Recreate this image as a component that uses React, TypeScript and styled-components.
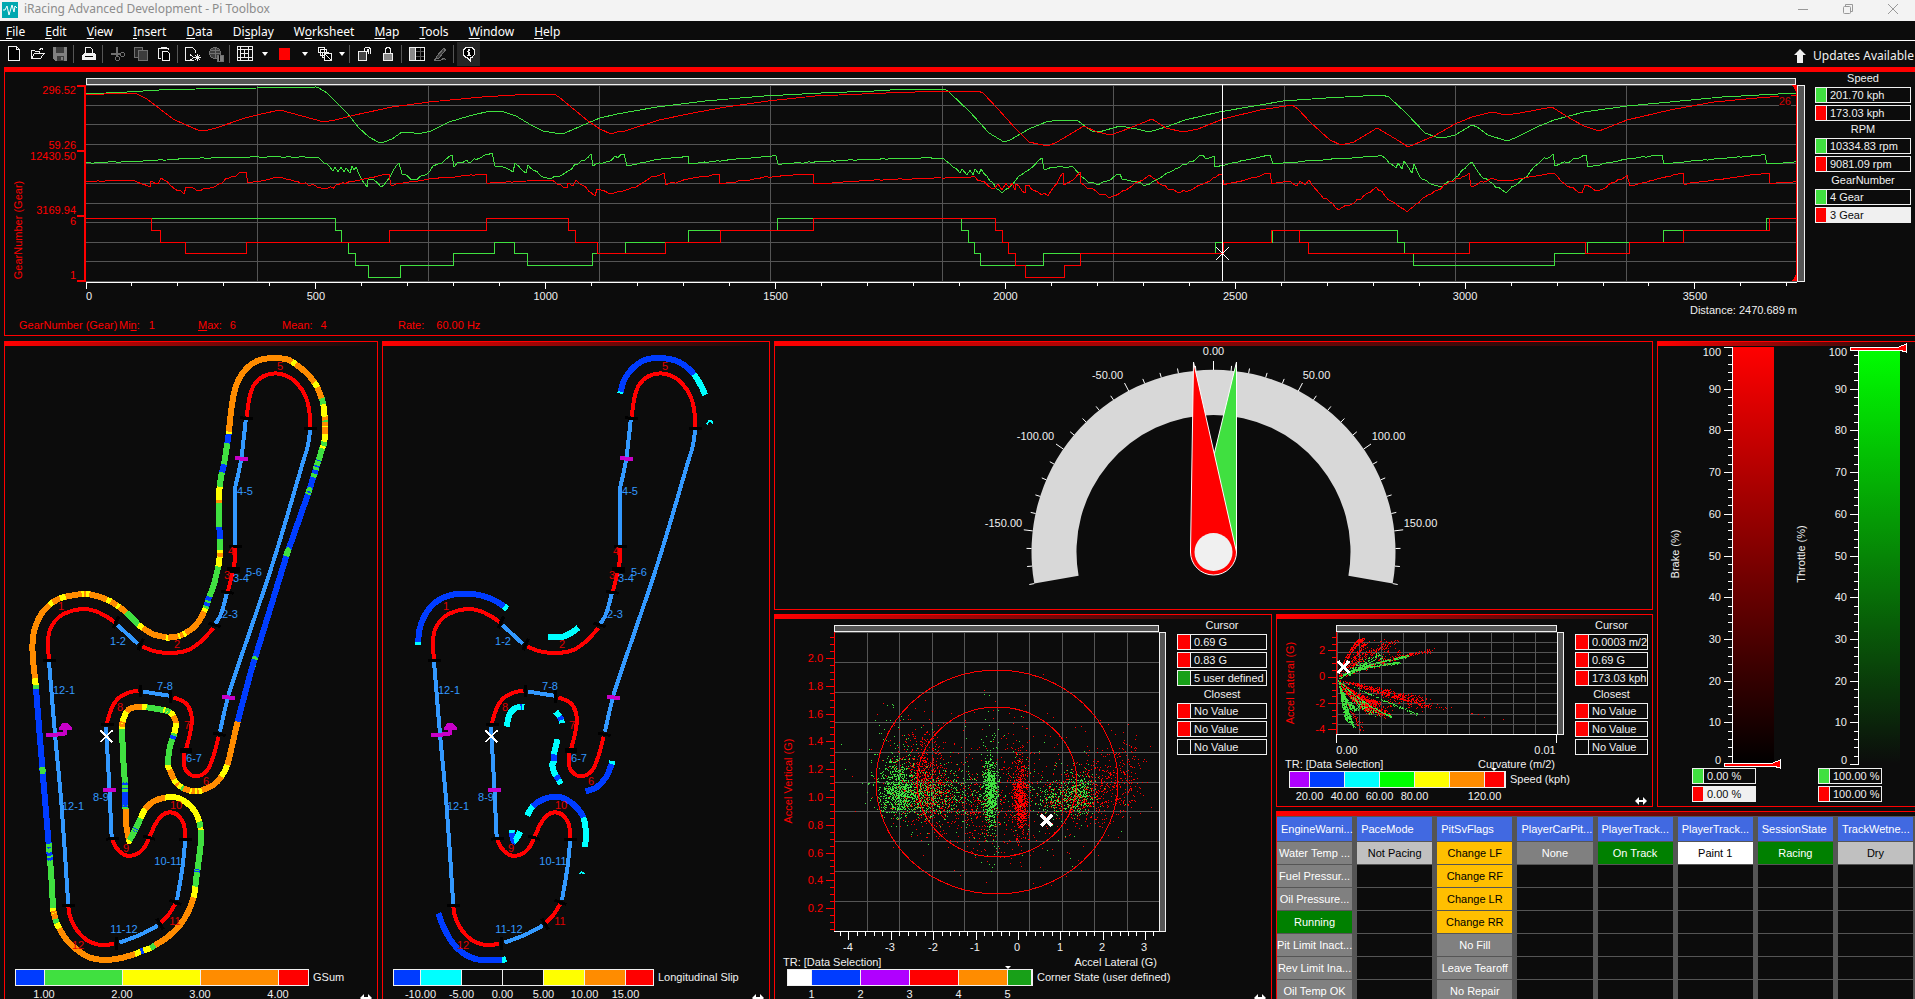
import React from 'react';
import styled, { createGlobalStyle } from 'styled-components';

const GREEN = '#40e040';
const RED = '#ff0000';
const BLUE = '#003cff';
const SKY = '#3399ff';
const CYAN = '#00ffff';
const YELLOW = '#ffff00';
const ORANGE = '#ff8c00';
const PURPLE = '#b000ff';
const MAGENTA = '#c800c8';
const BG = '#0c0c0c';
const GRID = '#555555';
const LIGHT = '#f0f0f0';

const GlobalStyle = createGlobalStyle`
  * { box-sizing: border-box; }
  html, body { margin: 0; padding: 0; background: ${BG}; overflow: hidden; }
  body { font: 11px/16px "Liberation Sans", Arial, sans-serif; color: ${LIGHT}; }
  svg { display: block; }
  svg text { font: 11px "Liberation Sans", Arial, sans-serif; }
  button { font: inherit; color: inherit; background: none; border: 0; padding: 0; margin: 0; }
`;

const Shell = styled.div`
  display: flex;
  flex-direction: column;
  height: 100vh;
  overflow: hidden;
`;

/* ---------- window chrome ---------- */

const TitleBar = styled.header`
  display: flex;
  align-items: center;
  height: 21px;
  padding-left: 2px;
  background: #f3f3f3;
  color: #8c8c8c;
  flex: none;
`;
const TitleText = styled.h1`
  flex: 1;
  margin: 0;
  padding: 0 0 3px 6px;
  font: 12px/18px "Noto Sans", "Open Sans", sans-serif;
`;
const WindowButton = styled.button`
  width: 45px;
  height: 20px;
  display: grid;
  place-items: center;
  padding-bottom: 4px;
`;

const MenuBar = styled.nav`
  display: flex;
  align-items: center;
  gap: 20px;
  height: 20px;
  padding: 2px 0 0 6px;
  border-bottom: 1px solid #ffffff;
  font: 12px/18px "Noto Sans", "Open Sans", sans-serif;
  flex: none;
  u { text-underline-offset: 2px; }
`;
const MenuButton = styled.button`
  height: 18px;
  color: #ffffff;
`;

const ToolBar = styled.div`
  display: flex;
  align-items: center;
  height: 26px;
  padding-left: 2px;
  flex: none;
`;
const ToolButton = styled.button<{ $w?: number; $lit?: boolean }>`
  width: ${(p) => p.$w ?? 23}px;
  height: 24px;
  display: grid;
  place-items: center;
  background: ${(p) => (p.$lit ? '#262626' : 'none')};
`;
const Separator = styled.span`
  width: 1px;
  height: 18px;
  margin: 0 3px 0 2px;
  background: #555;
`;
const Updates = styled.button`
  display: flex;
  align-items: center;
  gap: 7px;
  width: 121px;
  margin-left: auto;
  padding-top: 3px;
  overflow: hidden;
  white-space: nowrap;
  font: 12px/18px "Noto Sans", "Open Sans", sans-serif;
  svg { flex: none; }
`;

/* ---------- worksheet ---------- */

const Worksheet = styled.main`
  flex: 1;
  min-height: 0;
  display: flex;
  flex-direction: column;
  gap: 5px;
  margin: 0 -4px -5px 4px;
`;
const Lower = styled.div`
  flex: 1;
  min-height: 0;
  display: grid;
  gap: 4px;
  grid-template-columns:
    minmax(0, 374fr) minmax(0, 388fr) minmax(0, 498fr) minmax(0, 377fr) minmax(0, 262fr);
  grid-template-rows: 269px 193px minmax(0, 1fr);
  grid-template-areas:
    'gsum slip gauge gauge pedals'
    'gsum slip scatter curve pedals'
    'gsum slip scatter status status';
`;
const Panel = styled.section<{ $area?: string }>`
  position: relative;
  display: flex;
  flex-direction: column;
  flex: none;
  min-width: 0;
  min-height: 0;
  overflow: hidden;
  border: 1px solid ${RED};
  grid-area: ${(p) => p.$area ?? 'auto'};
`;
const Strip = styled.div<{ $active?: boolean }>`
  flex: none;
  height: 4px;
  background: ${(p) => (p.$active ? RED : `linear-gradient(90deg, ${RED}, ${BG})`)};
`;
const Row = styled.div`
  display: flex;
  align-items: flex-start;
`;
const CaptionRow = styled.div`
  display: flex;
  justify-content: space-between;
  line-height: 14px;
`;

/* ---------- channel read-outs ---------- */

const ReadoutList = styled.div<{ $w: number }>`
  flex: none;
  width: ${(p) => p.$w}px;
  display: flex;
  flex-direction: column;
  gap: 2px;
`;
const ReadoutTitle = styled.h2`
  margin: -2px 0;
  font-size: 11px;
  line-height: 17px;
  font-weight: 400;
  text-align: center;
`;
const ReadoutBox = styled.div<{ $selected?: boolean }>`
  display: flex;
  height: 16px;
  border: 1px solid ${LIGHT};
  line-height: 14px;
  white-space: nowrap;
  background: ${(p) => (p.$selected ? LIGHT : BG)};
  color: ${(p) => (p.$selected ? BG : LIGHT)};
`;
const Swatch = styled.span<{ $w: number; $c: string }>`
  flex: none;
  width: ${(p) => p.$w + 1}px;
  margin-right: 3px;
  background: ${(p) => p.$c};
  border-right: 1px solid ${LIGHT};
`;

type ReadoutProps = { c: string; v: string; w?: number; selected?: boolean };
const Readout = ({ c, v, w = 10, selected }: ReadoutProps) => (
  <ReadoutBox $selected={selected}>
    <Swatch $c={c} $w={w} />
    {v}
  </ReadoutBox>
);

/* ---------- colour legends ---------- */

const LegendWrap = styled.div<{ $ml: number }>`
  margin-left: ${(p) => p.$ml}px;
  flex: none;
`;
const LegendBar = styled.div`
  display: flex;
  gap: 4px;
  line-height: 17px;
`;
const LegendCells = styled.div`
  position: relative;
  display: flex;
  height: 17px;
  border: 1px solid ${LIGHT};
`;
const LegendCell = styled.span<{ $w: number; $c: string }>`
  width: ${(p) => p.$w}px;
  background: ${(p) => p.$c};
  border-right: 1px solid ${LIGHT};
  &:last-child { border-right: 0; }
`;
const LegendLabels = styled.div<{ $ml: number }>`
  display: flex;
  margin-left: ${(p) => p.$ml}px;
  line-height: 17px;
`;
const LegendLabel = styled.span<{ $w: number }>`
  width: ${(p) => p.$w}px;
  display: flex;
  justify-content: center;
  white-space: nowrap;
`;
const Marker = styled.i<{ $x: number }>`
  position: absolute;
  top: -4px;
  left: ${(p) => p.$x}px;
  border: 3px solid transparent;
  border-top-color: #fff;
  border-bottom: 0;
`;

type LegendProps = {
  ml: number; end: number; step: number; colors: string[]; labels: string[];
  title: string; marker?: number;
};
const Legend = ({ ml, end, step, colors, labels, title, marker }: LegendProps) => (
  <LegendWrap $ml={ml}>
    <LegendBar>
      <LegendCells>
        {colors.map((c, i) => (
          <LegendCell key={i} $c={c} $w={i === 0 || i === colors.length - 1 ? end : step} />
        ))}
        {marker !== undefined && <Marker $x={marker} />}
      </LegendCells>
      {title}
    </LegendBar>
    <LegendLabels $ml={end - Math.floor(step / 2)}>
      {labels.map((l, i) => <LegendLabel key={i} $w={step}>{l}</LegendLabel>)}
    </LegendLabels>
  </LegendWrap>
);

const ResizeMark = styled.svg`
  position: absolute;
  right: 5px;
  bottom: 1px;
`;
const Resize = () => (
  <ResizeMark width="12" height="8" viewBox="0 0 12 8" aria-hidden>
    <path d="M0 4L4 0V3H8V0L12 4L8 8V5H4V8Z" fill="#fff" />
  </ResizeMark>
);

/* ---------- drawing helpers ---------- */

type Pt = [number, number];
type CPt = [number, number, string?];

/* Catmull-Rom spline through the points, one cubic per span. */
const spans = (pts: Pt[]) =>
  pts.slice(0, -1).map((p1, i) => {
    const p0 = pts[i - 1] ?? p1;
    const p2 = pts[i + 1];
    const p3 = pts[i + 2] ?? p2;
    const f = (n: number) => n.toFixed(1);
    return `C${f(p1[0] + (p2[0] - p0[0]) / 6)} ${f(p1[1] + (p2[1] - p0[1]) / 6)} ${f(p2[0] - (p3[0] - p1[0]) / 6)} ${f(p2[1] - (p3[1] - p1[1]) / 6)} ${p2[0]} ${p2[1]}`;
  });

/* Splits a coloured point list into one path for each run of colour. */
const colourRuns = (pts: CPt[]) => {
  const segs = spans(pts as Pt[]);
  const out: { c: string; d: string }[] = [];
  pts.slice(0, -1).forEach((p, i) => {
    if (p[2] || i === 0) out.push({ c: p[2] ?? RED, d: `M${p[0]} ${p[1]}` });
    out[out.length - 1].d += segs[i];
  });
  return out;
};

const poly = (flat: number[]) => {
  let d = '';
  for (let i = 0; i < flat.length; i += 2) d += `${i ? 'L' : 'M'}${flat[i]} ${flat[i + 1]}`;
  return d;
};

const rng = (seed: number) => () => {
  seed = (seed * 1664525 + 1013904223) % 4294967296;
  return seed / 4294967296;
};

/* ---------- time / distance chart ---------- */

const speedGreen = [86,94,127,92,159,90,196,89,257,88,316,87,319,88,327,93,347,113,359,128,369,137,378,142,384,142,392,139,402,132,410,132,418,134,431,131,449,122,469,116,490,111,504,112,516,116,531,125,543,131,555,133,565,133,588,123,600,118,617,114,657,107,705,101,764,96,821,93,874,91,907,89,945,89,949,92,970,112,989,133,1004,142,1010,140,1029,129,1046,122,1059,120,1077,120,1086,127,1092,131,1099,132,1120,126,1137,129,1149,132,1166,127,1185,120,1219,112,1260,105,1283,101,1326,98,1382,95,1389,97,1406,113,1425,133,1436,137,1447,137,1455,135,1472,125,1477,127,1488,135,1507,141,1515,138,1537,127,1554,120,1584,112,1627,106,1670,102,1722,97,1797,93];
const speedRed = [86,95,122,93,137,94,147,99,173,119,186,125,198,130,208,130,216,128,245,118,261,114,280,110,302,116,324,122,335,120,355,115,392,107,429,102,482,97,531,94,554,94,559,97,588,121,600,129,611,134,617,132,625,131,659,120,693,113,726,107,768,101,815,96,886,93,945,91,978,91,983,93,998,109,1015,128,1029,142,1038,144,1048,146,1057,142,1084,126,1097,132,1111,135,1130,128,1152,119,1166,128,1183,132,1198,129,1223,119,1260,110,1292,105,1298,109,1311,123,1330,140,1341,145,1354,142,1377,128,1389,135,1399,141,1408,147,1434,136,1455,124,1472,117,1492,112,1506,115,1520,113,1552,107,1571,119,1584,126,1599,131,1627,120,1670,110,1714,102,1757,98,1797,95];
const rpmGreen = [86,163,139,161,204,158,255,157,318,157,327,164,333,171,335,167,338,172,341,167,344,172,346,168,350,173,352,166,354,170,356,167,359,174,365,184,367,187,368,180,374,180,381,187,390,177,393,171,399,163,402,174,414,180,427,174,433,166,442,163,452,155,454,167,458,162,462,163,467,160,468,162,492,153,495,166,506,168,513,172,515,163,526,173,528,165,543,177,551,179,565,173,591,154,593,166,624,154,627,166,640,163,661,159,688,156,689,164,739,159,776,156,778,164,853,160,914,158,943,158,949,163,960,173,962,169,967,175,970,170,973,175,975,169,979,174,981,169,990,181,1002,193,1025,172,1042,158,1044,169,1057,167,1073,167,1088,182,1098,185,1120,174,1122,179,1137,182,1146,185,1160,178,1189,162,1203,155,1206,159,1214,156,1215,167,1260,157,1270,155,1273,164,1317,160,1382,156,1396,168,1398,163,1402,169,1404,161,1412,173,1414,164,1420,177,1429,183,1442,187,1455,178,1472,162,1483,178,1506,193,1524,178,1541,161,1553,154,1555,166,1586,155,1588,167,1627,159,1662,155,1664,164,1714,159,1765,155,1767,164,1797,162];
const rpmRed = [86,182,122,180,135,181,150,187,151,181,158,184,161,178,170,185,184,194,186,187,200,191,210,188,229,178,246,172,248,183,280,177,294,181,324,189,355,181,389,174,391,185,429,179,486,174,487,183,551,180,567,188,568,183,573,186,576,180,595,196,597,189,610,194,629,189,636,187,651,177,664,173,666,185,688,179,719,174,720,184,768,177,813,174,814,184,874,180,975,177,981,181,994,189,998,184,1002,190,1006,183,1009,188,1012,183,1015,190,1016,184,1025,193,1026,185,1038,192,1048,196,1063,173,1064,185,1073,180,1080,172,1081,183,1090,189,1111,197,1132,186,1149,175,1162,185,1180,193,1200,185,1222,174,1224,185,1260,176,1270,173,1272,184,1290,181,1297,186,1300,181,1305,185,1309,180,1320,194,1339,210,1354,203,1376,187,1391,201,1407,212,1425,197,1447,184,1469,173,1471,186,1490,179,1507,181,1552,173,1567,186,1582,193,1585,185,1597,191,1627,175,1630,186,1683,173,1684,184,1769,173,1770,183,1797,182];
const gearGreen = [86,6,335,5,341,4,348,3,355,2,368,1,400,2,453,3,494,4,514,3,527,2,592,3,625,4,688,5,777,6,961,5,968,4,974,3,980,2,1043,3,1215,4,1272,5,1397,4,1404,3,1413,2,1554,3,1587,4,1663,5,1766,6];
const gearRed = [86,6,151,5,160,4,185,3,246,4,389,5,486,6,568,5,575,4,597,3,665,4,720,5,813,6,995,5,1002,4,1008,3,1015,2,1025,1,1064,2,1080,3,1223,4,1271,5,1299,4,1308,3,1469,4,1585,3,1629,4,1683,5,1769,6];
const gearY = [0, 277, 265, 253, 242, 230, 218];

const steps = (flat: number[]) => {
  let d = '';
  for (let i = 0; i < flat.length; i += 2) {
    const y = gearY[flat[i + 1]];
    d += i ? `H${flat[i]}V${y}` : `M${flat[i]} ${y}`;
  }
  return `${d}H1797`;
};

/* Engine-speed traces carry a little ripple on top of their main shape. */
const ripple = (flat: number[], amp: number, seed: number) => {
  const r = rng(seed);
  const out: number[] = [];
  for (let i = 0; i < flat.length - 2; i += 2) {
    const [x1, y1, x2, y2] = flat.slice(i, i + 4);
    out.push(x1, y1);
    const n = Math.floor((x2 - x1) / 3);
    const k = Math.abs(y2 - y1) / Math.max(1, x2 - x1) > 0.25 ? amp : amp / 3;
    for (let j = 1; j < n; j++)
      out.push(x1 + ((x2 - x1) * j) / n, y1 + ((y2 - y1) * j) / n + (r() - 0.5) * k);
  }
  out.push(flat[flat.length - 2], flat[flat.length - 1]);
  return out.map((v) => Math.round(v * 10) / 10);
};

const TimeBlock = styled.div`
  flex: 1;
  min-width: 0;
  height: 263px;
  padding-top: 6px;
`;
const TimeReadouts = styled.div`
  flex: none;
  padding: 0 7px 0 10px;
`;
const TimeGrid = styled.div`
  display: grid;
  grid-template-columns: 81px minmax(0, 1fr) 8px;
  grid-template-rows: 7px 197px 36px;
`;
const HScroll = styled.div`
  grid-column: 2;
  background: ${GRID};
  border: 1px solid ${LIGHT};
  margin-right: 1px;
`;
const VScroll = styled.div`
  grid-column: 3;
  grid-row: 2;
  background: ${GRID};
  border: 1px solid ${LIGHT};
`;
const PlotCell = styled.div`
  position: relative;
  grid-column: 2;
  grid-row: 2;
`;
const LapTag = styled.span`
  position: absolute;
  right: 6px;
  top: 9px;
  color: #d00000;
  background: ${BG};
  line-height: 14px;
`;
const AxisCell = styled.div`
  grid-column: 2;
  grid-row: 3;
`;
const LeftAxis = styled.svg`
  grid-column: 1;
  grid-row: 1 / span 3;
`;
const Distance = styled.div`
  text-align: right;
  line-height: 14px;
`;
const StatsRow = styled.dl`
  display: flex;
  margin: 0;
  padding: 0 0 0 14px;
  color: ${RED};
  line-height: 14px;
  dd { margin: 0; }
`;
const Stat = styled.div<{ $w: number; $gap: number }>`
  display: flex;
  gap: ${(p) => p.$gap}px;
  width: ${(p) => p.$w}px;
  white-space: nowrap;
`;

const XTicks = () => (
  <svg width="100%" height="21" overflow="visible" shapeRendering="crispEdges">
    <line x1="0" x2="100%" y1="0" y2="0" stroke="#fff" />
    {Array.from({ length: 38 }, (_, i) => {
      const x = `${(i * 100) / 37.22}%`;
      return (
        <g key={i}>
          <line x1={x} x2={x} y1="0" y2={i % 5 ? 4 : 7} stroke="#fff" />
          {i % 5 === 0 && (
            <text x={x} dx={i ? 0 : 3} y="18" fill={LIGHT} textAnchor="middle">{i * 100}</text>
          )}
        </g>
      );
    })}
  </svg>
);

const line = { fill: 'none', vectorEffect: 'non-scaling-stroke' as const };

const Timeline = () => (
  <Panel>
    <Strip $active />
    <Row>
      <TimeBlock>
        <TimeGrid>
          <LeftAxis width="81" height="210" viewBox="5 78 81 210" shapeRendering="crispEdges">
            <path d="M85 85V282" stroke={RED} strokeWidth="2" />
            <path d="M77 86H86M77 151H86M77 216H86M77 281H86" stroke={RED} strokeWidth="2" />
            <g fill={RED} textAnchor="end">
              <text x="76" y="94">296.52</text>
              <text x="76" y="149">59.26</text>
              <text x="76" y="160">12430.50</text>
              <text x="76" y="214">3169.94</text>
              <text x="76" y="225">6</text>
              <text x="76" y="279">1</text>
            </g>
            <text transform="translate(22 230) rotate(-90)" textAnchor="middle" fill={RED}>GearNumber (Gear)</text>
          </LeftAxis>
          <HScroll />
          <PlotCell>
            <svg width="100%" height="197" viewBox="86 85 1711 197" preserveAspectRatio="none" shapeRendering="crispEdges">
              <g stroke={GRID}>
                {Array.from({ length: 11 }, (_, i) => {
                  const y = Math.round(85 + i * 19.6);
                  return <path key={i} {...line} d={`M86 ${y}.5H1797`} />;
                })}
                {Array.from({ length: 9 }, (_, i) => {
                  const x = Math.round(86 + (i + 1) * 171.1);
                  return <path key={i} {...line} d={`M${x}.5 85V281`} />;
                })}
              </g>
              <path {...line} stroke={GREEN} d={poly(speedGreen)} />
              <path {...line} stroke={RED} d={poly(speedRed)} />
              <path {...line} stroke={GREEN} d={poly(ripple(rpmGreen, 3, 7))} />
              <path {...line} stroke={RED} d={poly(ripple(rpmRed, 3, 11))} />
              <path {...line} stroke={GREEN} d={steps(gearGreen)} />
              <path {...line} stroke={RED} d={steps(gearRed)} />
              <path {...line} stroke="#fff" d="M1222.5 85V281M1216 247L1229 260M1229 247L1216 260" />
              <path d="M1792 85H1797V93ZM1792 281H1797V273Z" fill={RED} />
              <path d="M1796.5 85V281" stroke={RED} />
            </svg>
            <LapTag>26</LapTag>
          </PlotCell>
          <VScroll />
          <AxisCell>
            <XTicks />
            <Distance>Distance: 2470.689 m</Distance>
          </AxisCell>
        </TimeGrid>
        <StatsRow>
          <Stat $w={100} $gap={4}><dt>GearNumber (Gear)</dt><dd /></Stat>
          <Stat $w={79} $gap={9}><dt>Mi<u>n</u>:</dt><dd>1</dd></Stat>
          <Stat $w={84} $gap={8}><dt><u>M</u>ax:</dt><dd>6</dd></Stat>
          <Stat $w={116} $gap={8}><dt>Mean:</dt><dd>4</dd></Stat>
          <Stat $w={90} $gap={12}><dt>Rate:</dt><dd>60.00 Hz</dd></Stat>
        </StatsRow>
      </TimeBlock>
      <TimeReadouts>
        <ReadoutList $w={96}>
          <ReadoutTitle>Speed</ReadoutTitle>
          <Readout c={GREEN} v="201.70 kph" />
          <Readout c={RED} v="173.03 kph" />
          <ReadoutTitle>RPM</ReadoutTitle>
          <Readout c={GREEN} v="10334.83 rpm" />
          <Readout c={RED} v="9081.09 rpm" />
          <ReadoutTitle>GearNumber</ReadoutTitle>
          <Readout c={GREEN} v="4 Gear" />
          <Readout c={RED} v="3 Gear" selected />
        </ReadoutList>
      </TimeReadouts>
    </Row>
  </Panel>
);

/* ---------- track maps ---------- */

/* Track coordinates are thirds of a pixel. */
const inner: CPt[][] = [
  [[205,1713,SKY],[185,1415],[165,1197],[147,980]],
  [[147,972,RED],[144,930],[148,890],[165,858],[195,835],[245,822],[285,828],[315,842],[345,862]],
  [[352,870,SKY],[413,926]],
  [[427,934,RED],[460,948],[510,954],[560,947],[600,922],[640,880]],
  [[645,868,SKY],[664,835],[680,777]],
  [[684,768,RED],[696,720],[704,680],[705,640]],
  [[705,632,SKY],[705,475],[712,430],[724,370],[738,250]],
  [[740,245,RED],[748,190],[762,150],[790,124],[828,115],[865,125],[895,150],[915,180],[927,220],[931,275]],
  [[931,285,SKY],[922,340],[908,385],[820,680],[705,1020],[683,1090],[660,1190]],
  [[656,1205,RED],[640,1265],[620,1308],[590,1324],[563,1313],[552,1290],[552,1250]],
  [[558,1243,RED],[568,1205],[575,1165],[572,1130],[555,1103],[520,1087]],
  [[512,1083,SKY],[430,1070]],
  [[415,1067,RED],[385,1073],[355,1090],[335,1120],[322,1160],[319,1172]],
  [[318,1175,SKY],[325,1300],[335,1505]],
  [[337,1515,RED],[350,1540],[370,1558],[390,1563],[415,1555],[435,1535],[448,1508],[465,1470],[485,1442],[510,1432],[535,1442],[552,1470],[556,1510]],
  [[556,1515,SKY],[547,1600],[531,1695]],
  [[525,1708,RED],[505,1740],[482,1763]],
  [[473,1772,SKY],[420,1800],[358,1823]],
  [[343,1827,RED],[300,1830],[260,1815],[230,1785],[210,1745],[205,1713]],
];

const gsum: CPt[] = [
  [455,1838,YELLOW],[430,1847,BLUE],[422,1850,YELLOW],[405,1857,ORANGE],[360,1870],[310,1875],[270,1868],[235,1848],[200,1815],[178,1780,YELLOW],[170,1765,GREEN],[166,1752,ORANGE],[160,1728,YELLOW],[159,1720,GREEN],[155,1640],[150,1575,BLUE],[149,1568,GREEN],[149,1562,BLUE],[148,1552,GREEN],[148,1545,BLUE],[146,1532,GREEN],[146,1526,BLUE],[127,1300,GREEN],[127,1297,BLUE],[108,1062,GREEN],[107,1050,YELLOW],[105,1030,ORANGE],[98,960],[99,905],[108,870],[125,835],[148,810,YELLOW],[158,802,ORANGE],[180,790,YELLOW],[197,785,ORANGE],[245,777,YELLOW],[252,777,ORANGE],[258,777,YELLOW],[268,778,ORANGE],[300,786],[320,794,YELLOW],[332,799,ORANGE],[350,811,YELLOW],[358,816,ORANGE],[378,832,GREEN],[400,853],[415,869,YELLOW],[428,879,ORANGE],[460,898],[498,907,YELLOW],[505,908,ORANGE],[535,904,YELLOW],[540,902,ORANGE],[550,898,YELLOW],[557,894,ORANGE],[585,874],[605,845],[612,830,YELLOW],[617,820,GREEN],[619,813,BLUE],[622,803,GREEN],[624,797,BLUE],[628,785,GREEN],[640,755],[650,715],[655,695,YELLOW],[659,665,ORANGE],[660,655,YELLOW],[660,645,GREEN],[660,612,BLUE],[658,575,GREEN],[656,545],[656,505,ORANGE],[657,495,YELLOW],[659,455,GREEN],[666,412,BLUE],[672,388,GREEN],[682,325,BLUE],[686,297,YELLOW],[687,290,ORANGE],[692,240],[702,175],[718,130],[745,95],[780,75],[825,69],[860,73],[876,80,YELLOW],[887,88,ORANGE],[920,114],[943,142,YELLOW],[952,157,ORANGE],[965,190,GREEN],[970,208,YELLOW],[974,245,ORANGE],[976,256,GREEN],[976,262,ORANGE],[976,272,YELLOW],[976,276,ORANGE],[976,297,YELLOW],[973,320,GREEN],[970,333,YELLOW],[967,340,GREEN],[956,375,BLUE],[955,378,GREEN],[951,392,BLUE],[949,396,GREEN],[947,405,BLUE],[944,416,GREEN],[940,427,BLUE],[925,475,GREEN],[924,478,BLUE],[860,660,GREEN],[859,664,BLUE],[765,970,GREEN],[764,973,BLUE],[750,1020],[713,1160,ORANGE],[698,1225],[682,1290,YELLOW],[664,1325,ORANGE],[640,1350],[606,1366,YELLOW],[596,1368,ORANGE],[590,1368,YELLOW],[584,1368,ORANGE],[575,1368,YELLOW],[570,1367,ORANGE],[550,1360,GREEN],[545,1357,YELLOW],[535,1350,ORANGE],[530,1345,YELLOW],[522,1334,ORANGE],[509,1304,YELLOW],[504,1290,GREEN],[508,1245],[517,1212,BLUE],[521,1202,GREEN],[523,1195,YELLOW],[528,1165,ORANGE],[520,1143,YELLOW],[510,1132,GREEN],[495,1126,YELLOW],[490,1125,GREEN],[440,1117,YELLOW],[425,1116,ORANGE],[395,1119],[380,1130,YELLOW],[368,1160,ORANGE],[366,1175,YELLOW],[366,1183,GREEN],[370,1275],[375,1345,BLUE],[375,1350,GREEN],[375,1358,BLUE],[375,1362,GREEN],[375,1370,BLUE],[376,1415,GREEN],[377,1423,ORANGE],[380,1480],[387,1512,YELLOW],[389,1516,GREEN],[406,1483,BLUE],[408,1480,GREEN],[422,1450,YELLOW],[436,1422,ORANGE],[460,1400],[495,1388,YELLOW],[530,1388],[560,1403],[585,1430],[598,1460,GREEN],[601,1478,YELLOW],[602,1485,GREEN],[602,1530],[592,1608,BLUE],[591,1612,GREEN],[586,1655,YELLOW],[581,1687,ORANGE],[565,1730],[540,1770],[505,1805],[465,1831,GREEN],[452,1839,YELLOW],[440,1843],
];

/* Slip arcs sit 15 units right of the reference line. */
const slip: CPt[][] = [
  [[721,176,CYAN],[722,170,BLUE],[735,130],[760,98],[795,75],[840,69],[885,76],[915,92],[942,118,CYAN],[962,150],[976,180]],
  [[115,930,CYAN],[115,922,BLUE],[118,885],[135,840],[165,803],[210,781],[260,776],[310,783],[345,797],[372,814,CYAN],[382,822]],
  [[505,907,CYAN],[545,906],[575,893],[595,878]],
  [[380,1175,CYAN],[388,1140],[405,1120],[422,1116,BLUE],[426,1116,CYAN],[432,1117]],
  [[527,1130,CYAN],[539,1145,BLUE],[544,1155,CYAN],[545,1165]],
  [[533,1213,CYAN],[522,1258,BLUE],[522,1278,CYAN],[517,1290],[522,1312],[529,1322,BLUE],[536,1335,CYAN],[543,1347]],
  [[617,1369,BLUE],[650,1357],[678,1327],[695,1287,CYAN],[697,1278]],
  [[442,1442,CYAN],[458,1414,BLUE],[490,1393],[530,1385],[565,1397],[592,1420],[610,1447,CYAN],[618,1495],[615,1537]],
  [[396,1485,CYAN],[396,1494,BLUE],[403,1520,CYAN],[421,1490]],
  [[175,1735,BLUE],[190,1775],[215,1820],[250,1855],[295,1874],[365,1875,CYAN],[378,1871]],
];

/* x, y, rotation and thickness of the corner boundary bars */
const bars: [number, number, number, number][] = [
  [148,978,0,9],[739,250,5,9],[931,280,0,9],[706,636,0,9],[700,706,0,18],[682,772,8,9],[644,870,18,9],
  [348,862,-65,10],[422,928,-65,10],[322,1170,0,9],[423,1068,90,9],[513,1085,90,9],[558,1246,0,14],
  [658,1198,10,9],[338,1511,-5,9],[447,1508,15,9],[556,1515,0,9],[526,1702,20,9],[480,1767,60,10],
  [350,1825,90,9],[205,1713,0,9],
];

const mapLabels: [string, number, number, number?][] = [
  ['5',841,94,1],['4-5',734,469],['4',693,648,1],['3',680,720,1],['3-4',723,730],['5-6',762,712],
  ['2-3',690,838],['1',184,814,1],['2',532,928,1],['1-2',355,917],['12-1',192,1066],['12-1',218,1414],
  ['7-8',495,1054],['8',361,1117,1],['7',562,1171,1],['6-7',581,1270],['6',618,1338,1],['8-9',302,1387],
  ['10',529,1411,1],['9',379,1540,1],['10-11',505,1579],['11-12',372,1783],['11',525,1759,1],['12',233,1831,1],
];

const MapSvg = styled.svg`
  width: 100%;
  height: 620px;
  flex: none;
  margin-bottom: 3px;
`;

const TrackMap = ({ x, children }: { x: number; children: React.ReactNode }) => (
  <MapSvg viewBox={`${x} 11 372 620`} preserveAspectRatio="xMinYMin meet" shapeRendering="crispEdges">
    <g transform="scale(0.3333)" fill="none">
      {children}
      {inner.map((s, i) =>
        colourRuns(s).map((r, j) => <path key={`${i}-${j}`} d={r.d} stroke={r.c} strokeWidth="12" />),
      )}
      {bars.map(([bx, by, a, w], i) => (
        <path key={i} d="M-19 0H19" stroke="#000" strokeWidth={w} transform={`translate(${bx} ${by}) rotate(${a})`} />
      ))}
      <g stroke={MAGENTA} strokeWidth="12">
        <path d="M705 369L744 373M666 1086L705 1089M309 1364H348M138 1200L170 1199L200 1195" />
        <path d="M177 1186V1178L188 1164H202L215 1178V1186H202V1198H188V1186Z" fill={MAGENTA} stroke="none" />
      </g>
      <path d="M301 1186L337 1222M337 1186L301 1222" stroke="#fff" strokeWidth="6" />
    </g>
    {mapLabels.map(([t, lx, ly, red], i) => (
      <text key={i} x={Math.round(lx / 3)} y={Math.round(ly / 3) + 4} textAnchor="middle" fill={red ? '#e00000' : SKY}>{t}</text>
    ))}
  </MapSvg>
);

const GSumPanel = () => (
  <Panel $area="gsum">
    <Strip />
    <TrackMap x={5}>
      {colourRuns(gsum).map((r, i) => <path key={i} d={r.d} stroke={r.c} strokeWidth="18" />)}
    </TrackMap>
    <Legend ml={10} end={29} step={78} title="GSum"
      colors={[BLUE, GREEN, YELLOW, ORANGE, RED]} labels={['1.00', '2.00', '3.00', '4.00']} />
    <Resize />
  </Panel>
);

const SlipPanel = () => (
  <Panel $area="slip">
    <Strip />
    <TrackMap x={-2}>
      <g transform="translate(-15 0)">
        {slip.map((s, i) =>
          colourRuns(s).map((r, j) => <path key={`${i}-${j}`} d={r.d} stroke={r.c} strokeWidth="18" />),
        )}
        <path d="M981 268L987 258H994L999 266M598 1617L604 1611L614 1617" stroke={CYAN} strokeWidth="5" />
      </g>
    </TrackMap>
    <Legend ml={10} end={27} step={41} title="Longitudinal Slip"
      colors={[BLUE, CYAN, BG, BG, YELLOW, ORANGE, RED]}
      labels={['-10.00', '-5.00', '0.00', '5.00', '10.00', '15.00']} />
    <Resize />
  </Panel>
);

/* ---------- steering gauge ---------- */

const CX = 1213;
const CY = 552;
const polar = (deg: number, r: number): Pt => {
  const a = (deg * Math.PI) / 180;
  return [Math.round((CX + r * Math.sin(a)) * 10) / 10, Math.round((CY - r * Math.cos(a)) * 10) / 10];
};

const Gauge = () => {
  const [a, b, c, d] = [polar(-100, 182), polar(100, 182), polar(100, 137), polar(-100, 137)];
  return (
    <Panel $area="gauge">
      <Strip />
      <svg width="100%" height="262" viewBox="775 346 876 262">
        <path d={`M${a}A182 182 0 1 1 ${b}L${c}A137 137 0 1 0 ${d}Z`} fill="#d8d8d8" />
        {Array.from({ length: 37 }, (_, i) => {
          const v = (i - 18) * 10;
          const p = polar((v * 100) / 180, 182);
          const q = polar((v * 100) / 180, v % 50 ? 187 : 191);
          return <path key={i} d={`M${p}L${q}`} stroke="#fff" />;
        })}
        <path d="M1236 362L1190 552H1236Z" fill={GREEN} stroke="#fff" />
        <path d="M1193 362L1190 552A23 23 0 0 0 1236 552Z" fill={RED} stroke="#fff" />
        <circle cx={CX} cy={CY} r="19" fill={LIGHT} />
        <g fill={LIGHT} textAnchor="middle">
          <text x="1213" y="355">0.00</text>
          <text x="1107" y="379">-50.00</text>
          <text x="1316" y="379">50.00</text>
          <text x="1035" y="440">-100.00</text>
          <text x="1388" y="440">100.00</text>
          <text x="1003" y="527">-150.00</text>
          <text x="1420" y="527">150.00</text>
        </g>
      </svg>
    </Panel>
  );
};

/* ---------- scatter plots ---------- */

const gauss = (r: () => number) => r() + r() + r() + r() - 2;

/* cx, cy, spread x, spread y, number of samples */
type Cluster = [number, number, number, number, number];
const cloud = (cs: Cluster[], seed: number) => {
  const r = rng(seed);
  let d = '';
  cs.forEach(([cx, cy, sx, sy, n]) => {
    for (let i = 0; i < n; i++) {
      const x = Math.round(cx + gauss(r) * sx);
      const y = Math.round(cy + gauss(r) * sy);
      if (x > 834 && x < 1158 && y > 633 && y < 930) d += `M${x} ${y}h1v1h-1z`;
    }
  });
  return d;
};
const redCloud = cloud([
  [1020,798,6,30,560],[1020,790,12,56,200],[924,775,18,34,420],[940,800,40,34,380],[985,815,26,34,170],
  [1075,797,30,24,340],[1105,785,28,32,260],[1000,785,110,66,330],[1125,770,14,32,90],[916,760,24,44,110],
], 5);
const greenCloud = cloud([
  [899,788,18,24,560],[912,797,32,16,420],[990,790,6,24,600],[990,790,8,56,190],[950,792,28,24,220],
  [1052,799,16,14,170],[1079,793,13,18,270],[896,765,24,50,110],[1000,800,110,56,140],
], 9);

/* Bundles of samples that follow a curve from the origin: end, bend, thickness, count */
type Fan = [number, number, number, number, number, number];
const fan = (fs: Fan[], seed: number) => {
  const r = rng(seed);
  let d = '';
  fs.forEach(([ex, ey, bx, by, w, n]) => {
    for (let i = 0; i < n; i++) {
      const t = Math.sqrt(r());
      const u = 1 - t;
      const x = u * u * 1338 + 2 * u * t * bx + t * t * ex + gauss(r) * w * t;
      const y = u * u * 679 + 2 * u * t * by + t * t * ey + gauss(r) * w * t;
      d += `M${Math.max(1337, Math.round(x))} ${Math.round(y)}h1v1h-1z`;
    }
  });
  return d;
};
const redFan = fan([
  [1360,638,1343,655,1,110],[1364,638,1348,650,1,110],[1366,642,1350,662,3,110],[1396,640,1362,652,3,60],
  [1385,645,1355,660,6,110],[1432,650,1375,660,2,120],[1405,652,1360,668,6,80],
  [1424,700,1370,688,4,190],[1430,707,1372,690,2,120],[1460,710,1390,700,2,30],[1418,704,1370,690,6,120],
  [1372,710,1348,700,4,260],[1385,714,1350,700,4,190],[1378,704,1350,694,3,210],[1362,728,1345,705,3,60],
  [1390,712,1360,700,5,80],
], 21);
const greenFan = fan([
  [1408,656,1352,666,1,190],[1400,662,1350,668,1,160],[1380,656,1350,668,4,100],[1372,664,1348,672,3,100],
  [1354,728,1346,706,1,110],[1350,722,1342,700,2,160],[1356,710,1342,700,3,150],[1346,720,1341,696,1,110],
  [1417,714,1372,696,1,90],[1392,717,1355,700,1,120],[1376,714,1352,702,4,90],
], 33);

const GridLines = ({ x0, y0, x1, y1 }: { x0: number; y0: number; x1: number; y1: number }) => (
  <g stroke={GRID}>
    {Array.from({ length: 10 }, (_, i) => {
      const x = Math.round(x0 + ((x1 - x0) * i) / 10);
      const y = Math.round(y0 + ((y1 - y0) * i) / 10);
      return <path key={i} d={`M${x}.5 ${y0}V${y1}M${x0} ${y}.5H${x1}`} />;
    })}
  </g>
);

const ScatterBody = styled.div<{ $h: number }>`
  display: flex;
  justify-content: space-between;
  flex: none;
  height: ${(p) => p.$h}px;
  padding-right: 4px;
  svg { flex: 1; min-width: 0; }
`;
const WideCaption = styled(CaptionRow)`
  padding: 0 114px 0 8px;
`;
const NarrowCaption = styled(CaptionRow)`
  padding: 0 97px 0 8px;
`;

const CornerScatter = () => (
  <Panel $area="scatter">
    <Strip />
    <ScatterBody $h={336}>
      <svg height="336" viewBox="775 619 401 336" preserveAspectRatio="xMinYMin meet" shapeRendering="crispEdges">
        <GridLines x0={834} y0={632} x1={1159} y1={931} />
        <path d={redCloud} fill={RED} />
        <path d={greenCloud} fill={GREEN} />
        <g fill="none" stroke={RED}>
          <ellipse cx="997" cy="782" rx="121" ry="112" />
          <ellipse cx="997" cy="782" rx="80" ry="75" />
        </g>
        <path d="M1041 815L1052 826M1052 815L1041 826" stroke="#fff" strokeWidth="3" />
        <g fill={GRID} stroke={LIGHT}>
          <rect x="834.5" y="625.5" width="324" height="6" />
          <rect x="1159.5" y="632.5" width="6" height="299" />
        </g>
        <path d="M834 931.5H1159" stroke="#fff" />
        <path d="M834.5 632V931" stroke={RED} />
        {Array.from({ length: 43 }, (_, i) => {
          const y = Math.round(929 - i * 6.95);
          return <path key={i} d={`M${(i + 1) % 4 ? 830 : 826} ${y}.5H834`} stroke={RED} />;
        })}
        {Array.from({ length: 38 }, (_, i) => {
          const x = Math.round(840 + i * 8.47);
          return <path key={i} d={`M${x}.5 932V${i % 5 === 1 ? 940 : 936}`} stroke="#fff" />;
        })}
        <g fill={RED} textAnchor="end">
          {['2.0', '1.8', '1.6', '1.4', '1.2', '1.0', '0.8', '0.6', '0.4', '0.2'].map((t, i) => (
            <text key={t} x="823" y={Math.round(662 + i * 27.8)}>{t}</text>
          ))}
        </g>
        <g fill={LIGHT} textAnchor="middle">
          {[-4, -3, -2, -1, 0, 1, 2, 3].map((t, i) => (
            <text key={t} x={Math.round(848 + i * 42.3)} y="951">{t}</text>
          ))}
        </g>
        <text transform="translate(792 781) rotate(-90)" textAnchor="middle" fill={RED}>Accel Vertical (G)</text>
      </svg>
      <ReadoutList $w={90}>
        <ReadoutTitle>Cursor</ReadoutTitle>
        <Readout w={12} c={RED} v="0.69 G" />
        <Readout w={12} c={RED} v="0.83 G" />
        <Readout w={12} c="#18a018" v="5 user defined" />
        <ReadoutTitle>Closest</ReadoutTitle>
        <Readout w={12} c={RED} v="No Value" />
        <Readout w={12} c={RED} v="No Value" />
        <Readout w={12} c={BG} v="No Value" />
      </ReadoutList>
    </ScatterBody>
    <WideCaption><span>TR: [Data Selection]</span><span>Accel Lateral (G)</span></WideCaption>
    <Legend ml={12} end={24} step={49} title="Corner State (user defined)" marker={217}
      colors={['#ffffff', BLUE, PURPLE, RED, ORANGE, '#18a018']} labels={['1', '2', '3', '4', '5']} />
    <Resize />
  </Panel>
);

const CurvatureScatter = () => (
  <Panel $area="curve">
    <Strip />
    <ScatterBody $h={138}>
      <svg height="138" viewBox="1277 619 296 138" preserveAspectRatio="xMinYMin meet" shapeRendering="crispEdges">
        <GridLines x0={1337} y0={632} x1={1557} y1={734} />
        <path d={redFan} fill={RED} />
        <path d={greenFan} fill={GREEN} />
        <path d="M1471 713h2v1h-2zM1478 714h1v1h-1zM1484 717h1v1h-1zM1503 719h1v1h-1z" fill={RED} />
        <path d="M1338 661L1349 673M1349 661L1338 673" stroke="#fff" strokeWidth="3" />
        <g fill={GRID} stroke={LIGHT}>
          <rect x="1336.5" y="625.5" width="220" height="6" />
          <rect x="1557.5" y="632.5" width="6" height="102" />
        </g>
        <path d="M1336 734.5H1557M1336.5 735V743M1556.5 735V743" stroke="#fff" />
        <path d="M1336.5 632V734" stroke={RED} />
        {Array.from({ length: 15 }, (_, i) => {
          const y = Math.round(637 + i * 6.6);
          return <path key={i} d={`M${i % 4 === 2 ? 1328 : 1332} ${y}.5H1336`} stroke={RED} />;
        })}
        <g fill={RED} textAnchor="end">
          <text x="1325" y="654">2</text>
          <text x="1325" y="680">0</text>
          <text x="1325" y="707">-2</text>
          <text x="1325" y="733">-4</text>
        </g>
        <g fill={LIGHT} textAnchor="middle">
          <text x="1347" y="754">0.00</text>
          <text x="1545" y="754">0.01</text>
        </g>
        <text transform="translate(1294 683) rotate(-90)" textAnchor="middle" fill={RED}>Accel Lateral (G)</text>
      </svg>
      <ReadoutList $w={73}>
        <ReadoutTitle>Cursor</ReadoutTitle>
        <Readout w={12} c={RED} v="0.0003 m/2" />
        <Readout w={12} c={RED} v="0.69 G" />
        <Readout w={12} c={RED} v="173.03 kph" />
        <ReadoutTitle>Closest</ReadoutTitle>
        <Readout w={12} c={RED} v="No Value" />
        <Readout w={12} c={RED} v="No Value" />
        <Readout w={12} c={BG} v="No Value" />
      </ReadoutList>
    </ScatterBody>
    <NarrowCaption><span>TR: [Data Selection]</span><span>Curvature (m/2)</span></NarrowCaption>
    <Legend ml={12} end={20} step={35} title="Speed (kph)" marker={201}
      colors={[PURPLE, BLUE, CYAN, '#00ff00', YELLOW, ORANGE, RED]}
      labels={['20.00', '40.00', '60.00', '80.00', '', '120.00']} />
    <Resize />
  </Panel>
);

/* ---------- pedals ---------- */

const PedalColumn = styled.div`
  flex: none;
  width: 126px;
`;
const PedalReadouts = styled.div`
  padding: 2px 0 0 34px;
`;

type PedalProps = { label: string; from: string; to: string; pointer: number; value: string; selected?: boolean };
const Pedal = ({ label, from, to, pointer, value, selected }: PedalProps) => (
  <PedalColumn>
    <svg width="126" height="420" viewBox="1658 346 126 420" overflow="visible" shapeRendering="crispEdges">
      <defs>
        <linearGradient id={label} x1="0" y1="0" x2="0" y2="1">
          <stop offset="0" stopColor={from} />
          <stop offset="1" stopColor={to} />
        </linearGradient>
      </defs>
      <rect x="1733" y="347" width="41" height="417" fill={`url(#${label})`} />
      <path d="M1732.5 347V765" stroke="#fff" />
      {Array.from({ length: 51 }, (_, i) => {
        const y = Math.round(347 + i * 8.34);
        return <path key={i} d={`M${i % 5 ? 1728 : 1724} ${y}.5H1732`} stroke="#fff" />;
      })}
      <g fill={LIGHT} textAnchor="end">
        {[100, 90, 80, 70, 60, 50, 40, 30, 20, 10, 0].map((t, i) => (
          <text key={t} x="1721" y={i === 0 ? 356 : i === 10 ? 764 : Math.round(351 + i * 41.7)}>{t}</text>
        ))}
      </g>
      <path d={`M1724 ${pointer - 1}H1773L1780 ${pointer - 4}V${pointer + 4}L1773 ${pointer + 2}H1724Z`} fill={RED} stroke="#fff" />
      <text transform="translate(1679 554) rotate(-90)" textAnchor="middle" fill={LIGHT}>{label} (%)</text>
    </svg>
    <PedalReadouts>
      <ReadoutList $w={64}>
        <Readout c={GREEN} v={value} />
        <Readout c={RED} v={value} selected={selected} />
      </ReadoutList>
    </PedalReadouts>
  </PedalColumn>
);

const Pedals = () => (
  <Panel $area="pedals">
    <Strip />
    <Row>
      <Pedal label="Brake" from="#ff0000" to="#000000" pointer={764} value="0.00 %" selected />
      <Pedal label="Throttle" from="#00ff00" to={BG} pointer={348} value="100.00 %" />
    </Row>
  </Panel>
);

/* ---------- status table ---------- */

const tone = {
  off: ['#808080', '#ffffff'],
  on: ['#008000', '#ffffff'],
  amber: ['#ffbf00', '#000000'],
  silver: ['#c0c0c0', '#000000'],
  white: ['#ffffff', '#000000'],
  none: [BG, LIGHT],
} as const;
type Tone = keyof typeof tone;

const columns: { name: string; cells: [string, Tone][] }[] = [
  { name: 'EngineWarni...', cells: [['Water Temp ...', 'off'], ['Fuel Pressur...', 'off'], ['Oil Pressure...', 'off'], ['Running', 'on'], ['Pit Limit Inact...', 'off'], ['Rev Limit Ina...', 'off'], ['Oil Temp OK', 'off']] },
  { name: 'PaceMode', cells: [['Not Pacing', 'silver']] },
  { name: 'PitSvFlags', cells: [['Change LF', 'amber'], ['Change RF', 'amber'], ['Change LR', 'amber'], ['Change RR', 'amber'], ['No Fill', 'off'], ['Leave Tearoff', 'off'], ['No Repair', 'off']] },
  { name: 'PlayerCarPit...', cells: [['None', 'off']] },
  { name: 'PlayerTrack...', cells: [['On Track', 'on']] },
  { name: 'PlayerTrack...', cells: [['Paint 1', 'white']] },
  { name: 'SessionState', cells: [['Racing', 'on']] },
  { name: 'TrackWetne...', cells: [['Dry', 'silver']] },
];

const StatusTable = styled.table`
  width: 100%;
  table-layout: fixed;
  border-spacing: 0;
  border-top: 1px solid ${GRID};
  font-size: 11px;
`;
const HeadCell = styled.th`
  height: 25px;
  padding: 0 0 0 4px;
  white-space: nowrap;
  text-align: left;
  font-weight: 400;
  line-height: 23px;
  color: #fff;
  background: #4169e1;
  border-right: 5px solid ${GRID};
  border-bottom: 1px solid ${GRID};
`;
const BodyCell = styled.td<{ $t: Tone }>`
  height: 23px;
  padding: 0;
  white-space: nowrap;
  text-align: center;
  line-height: 20px;
  color: ${(p) => tone[p.$t][1]};
  background: ${(p) => tone[p.$t][0]};
  border-right: 5px solid ${GRID};
  border-bottom: 1px solid ${GRID};
`;

const Status = () => (
  <Panel $area="status">
    <Strip />
    <StatusTable>
      <thead>
        <tr>{columns.map((c, i) => <HeadCell key={i} scope="col">{c.name}</HeadCell>)}</tr>
      </thead>
      <tbody>
        {Array.from({ length: 7 }, (_, r) => (
          <tr key={r}>
            {columns.map((c, i) => {
              const [text, t] = c.cells[r] ?? ['', 'none' as Tone];
              return <BodyCell key={i} $t={t}>{text}</BodyCell>;
            })}
          </tr>
        ))}
      </tbody>
    </StatusTable>
  </Panel>
);

/* ---------- toolbar icons ---------- */

const Icon = ({ children, dim }: { children: React.ReactNode; dim?: boolean }) => (
  <svg width="16" height="16" viewBox="0 0 16 16" fill="none" stroke={dim ? '#707070' : '#f0f0f0'} shapeRendering="crispEdges" aria-hidden>
    {children}
  </svg>
);
const Caret = () => (
  <svg width="6" height="4" viewBox="0 0 6 4" aria-hidden><path d="M0 0H6L3 4Z" fill="#fff" /></svg>
);

const icons = {
  new: <Icon><path d="M2.5 .5H10.5L13.5 3.5V14.5H2.5ZM10.5 .5V3.5H13.5" fill="#000" /></Icon>,
  open: <Icon><path d="M2.500 12.5V4.5H5.5L6.5 5.5H10.5V7.5M2.5 12.5L5.5 7.5H15L11.5 12.5ZM10 3.5L13 2.5L14.5 4.5" /></Icon>,
  save: <Icon dim><path d="M1 1H15V15H3L1 13Z" fill="#808080" stroke="none" /><path d="M4 1H12V7H4ZM5 10H12V15H5Z" fill="#3c3c3c" stroke="none" /><path d="M9 11H11V14H9Z" fill="#808080" stroke="none" /></Icon>,
  print: <Icon><path d="M4.5 7.5V1.5H9.5L11.5 3.5V7.5" /><path d="M1 9L3 7H13L15 9V14H1Z" fill="#f0f0f0" stroke="none" /><path d="M4 10.5H12" stroke="#000" /></Icon>,
  cut: <Icon dim><path d="M6.5 1V10M1 7.5H10" strokeWidth="2" /><circle cx="12.5" cy="8.5" r="2" /><circle cx="7.5" cy="12.5" r="2" /></Icon>,
  copy: <Icon dim><path d="M1.5 1.5H9.5V11.5H1.5Z" fill="#2a2a2a" /><path d="M5.5 4.5H14.5V14.5H5.5Z" fill="#3c3c3c" /></Icon>,
  paste: <Icon><path d="M5 12.5H2.5V2.5H12.5V4M5 3V1.5H10V3" /><path d="M6.5 5.5H11.5L13.5 7.5V14.5H6.5Z" fill="#000" /></Icon>,
  import: <Icon><path d="M9 14.5H.5V1.5H7.5L10.5 4.5V7M5 8.5L9 11.5L5 14.5" /><path d="M12.5 8V15M9 11.5H16M10 9L15 14M15 9L10 14" /></Icon>,
  globe: <Icon dim><circle cx="7" cy="7" r="5.5" fill="#3c3c3c" /><path d="M2 7H12M7 2V12M3 4H11" /><path d="M9 9H15V15H9Z" fill="#808080" /><path d="M11.5 9V15" stroke="#000" /></Icon>,
  grid: <Icon><path d="M.5 .5H15.5V14.5H.5ZM3.5 1V15M11.5 1V15M0 3.5H16M0 11.5H16M7.5 4V12M4 7.5H12" /></Icon>,
  colour: <Icon><path d="M2 2H13V14H2Z" fill={RED} stroke="none" /></Icon>,
  layers: <Icon><path d="M1.5 1.5H7.5V6.5H1.5ZM3.5 3.5H9.5V9.5H3.5ZM5.5 6.5H11.5V11.5H5.5Z" fill="#000" /><path d="M7.5 7.5H14.5V14.5H7.5ZM7.5 7.5L14.5 14.5" fill="#000" /></Icon>,
  unlock: <Icon><path d="M1.5 5.5H9.5V14.5H1.5Z" fill="#444" /><path d="M7.5 5V2.5L9 1.5H12L13.5 3V7.5M10 6V4L11 3.5L11.500 4V7.5" /></Icon>,
  lock: <Icon><path d="M3.5 7.5H12.5V14.5H3.5Z" fill="#888" /><path d="M5.5 7V3L7 1.5H9L10.5 3V7" /></Icon>,
  panel: <Icon><path d="M.5 1.5H15.5V14.5H.5Z" fill="#000" /><path d="M1 2H6V14H1Z" fill="#888" stroke="none" /><path d="M6.5 2V14" /><path d="M11.5 2V14M7 5.5H15M7 10.5H15" stroke="#555" /></Icon>,
  pencil: <Icon dim><path d="M12 2L5 10L3 13.5L7 12L13.5 4ZM2 14.5H8L12 12L14 13.5" fill="#3c3c3c" /></Icon>,
  info: <Icon><path d="M5 1.5H11L13.5 4V8.500L11 11.5H10L9.500 15L6 11.5H5L2.5 9V4Z" fill="#000" /><path d="M8 3V4.5M8 5.5V10" strokeWidth="2" /><path d="M6 5.5H8M6 9.5H10" /></Icon>,
};

const Tool = ({ name, lit }: { name: keyof typeof icons; lit?: boolean }) => (
  <ToolButton type="button" aria-label={name} $lit={lit}>{icons[name]}</ToolButton>
);
const Drop = ({ w, of }: { w: number; of: string }) => (
  <ToolButton type="button" $w={w} aria-label={`${of} options`}><Caret /></ToolButton>
);

const menus: [string, string, string][] = [
  ['', 'F', 'ile'], ['', 'E', 'dit'], ['', 'V', 'iew'], ['', 'I', 'nsert'], ['', 'D', 'ata'], ['Di', 's', 'play'],
  ['W', 'o', 'rksheet'], ['', 'M', 'ap'], ['', 'T', 'ools'], ['', 'W', 'indow'], ['', 'H', 'elp'],
];

export default function App() {
  return (
    <Shell>
      <GlobalStyle />
      <TitleBar>
        <svg width="16" height="18" viewBox="0 0 16 18" aria-hidden>
          <rect width="16" height="16" fill="#00a8b0" />
          <path d="M1 8H3L5 4L7 13L10 3L12 10L13 4L15 6" fill="none" stroke="#fff" />
        </svg>
        <TitleText>iRacing Advanced Development - Pi Toolbox</TitleText>
        <WindowButton type="button" aria-label="Minimize">
          <svg width="10" height="10" viewBox="0 0 10 10"><path d="M0 5.5H10" stroke="#999" /></svg>
        </WindowButton>
        <WindowButton type="button" aria-label="Restore">
          <svg width="10" height="10" viewBox="0 0 10 10" fill="none" stroke="#999"><rect x=".5" y="2.5" width="7" height="7" rx="1" /><path d="M2.5 2V.5H9.5V7.5H8" /></svg>
        </WindowButton>
        <WindowButton type="button" aria-label="Close">
          <svg width="10" height="10" viewBox="0 0 10 10" stroke="#999"><path d="M0 0L10 10M10 0L0 10" /></svg>
        </WindowButton>
      </TitleBar>
      <MenuBar>
        {menus.map(([a, b, c]) => <MenuButton key={a + b + c} type="button">{a}<u>{b}</u>{c}</MenuButton>)}
      </MenuBar>
      <ToolBar>
        <Tool name="new" /><Tool name="open" /><Tool name="save" />
        <Separator />
        <Tool name="print" />
        <Separator />
        <Tool name="cut" /><Tool name="copy" /><Tool name="paste" />
        <Separator />
        <Tool name="import" /><Tool name="globe" />
        <Separator />
        <Tool name="grid" /><Drop w={17} of="grid" />
        <Tool name="colour" /><Drop w={17} of="colour" />
        <Tool name="layers" /><Drop w={11} of="layers" />
        <Separator />
        <Tool name="unlock" /><Tool name="lock" />
        <Separator />
        <Tool name="panel" /><Tool name="pencil" />
        <Separator />
        <Tool name="info" lit />
        <Updates type="button">
          <svg width="12" height="14" viewBox="0 0 12 14" aria-hidden><path d="M6 0L12 6H9V14H3V6H0Z" fill={LIGHT} /></svg>
          Updates Available
        </Updates>
      </ToolBar>
      <Worksheet>
        <Timeline />
        <Lower>
          <GSumPanel />
          <SlipPanel />
          <Gauge />
          <Pedals />
          <CornerScatter />
          <CurvatureScatter />
          <Status />
        </Lower>
      </Worksheet>
    </Shell>
  );
}
